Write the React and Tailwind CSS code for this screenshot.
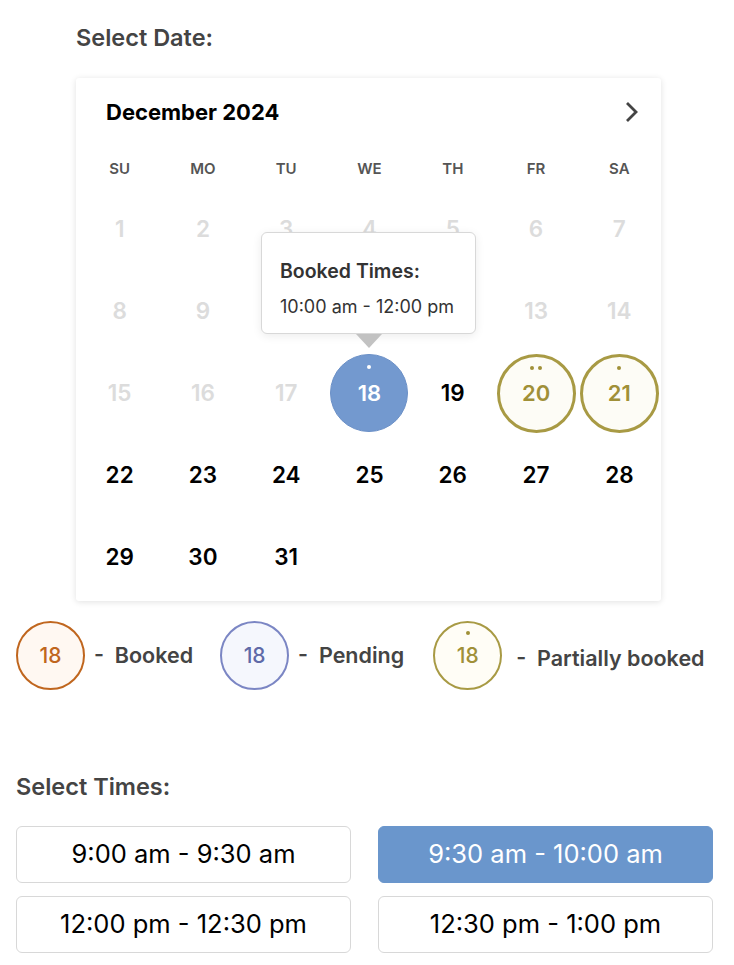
import React from 'react';

const days = ['SU', 'MO', 'TU', 'WE', 'TH', 'FR', 'SA'];

function Dot({ className = 'bg-white' }) {
  return <span className={`block h-[4px] w-[4px] rounded-full ${className}`}></span>;
}

function DayCell({ d }) {
  if (d === 18) {
    return (
      <div className="relative flex h-[78px] w-[78px] items-center justify-center rounded-full border border-[#6b90c7] bg-[#7399cf] text-[22px] font-semibold text-white">
        <div className="absolute top-[10px] left-1/2 -translate-x-1/2"><Dot /></div>
        18
      </div>
    );
  }
  if (d === 20 || d === 21) {
    return (
      <div className="relative flex h-[79px] w-[79px] items-center justify-center rounded-full border-[3px] border-[#a89a44] bg-[#fdfcf6] text-[22px] font-semibold text-[#a09038]">
        <div className="absolute top-[9px] left-1/2 flex -translate-x-1/2 gap-[4px]">
          <Dot className="bg-[#a09038]" />
          {d === 20 && <Dot className="bg-[#a09038]" />}
        </div>
        {d}
      </div>
    );
  }
  const disabled = d < 18;
  return (
    <span className={`text-[22.5px] font-semibold ${disabled ? 'text-[#dcdcdc]' : 'text-black'}`}>{d}</span>
  );
}

function LegendCircle({ border, bg, text, dot, label, labelClass = '' }) {
  return (
    <div className="flex items-center">
      <div className={`relative flex h-[69px] w-[69px] items-center justify-center rounded-full border-[2.5px] ${border} ${bg} ${text} text-[21px] font-medium`}>
        {dot && (
          <div className="absolute top-[8px] left-1/2 -translate-x-1/2">
            <Dot className="bg-[#a09038]" />
          </div>
        )}
        18
      </div>
      <span className={`ml-[9px] text-[21.5px] font-semibold text-[#444] ${labelClass}`}>- &nbsp;{label}</span>
    </div>
  );
}

function App() {
  const cells = [];
  for (let i = 1; i <= 31; i++) cells.push(i);
  const times = ['9:00 am - 9:30 am', '9:30 am - 10:00 am', '12:00 pm - 12:30 pm', '12:30 pm - 1:00 pm'];

  return (
    <div className="min-h-screen bg-white px-4 pt-[24px] font-['Inter','Noto_Sans',sans-serif]">
      <div className="ml-[60px]">
        <h2 className="h-[28px] text-[23.5px] font-semibold leading-[28px] text-[#444]">Select Date:</h2>
        <div className="relative mt-[26px] w-[585px] rounded-[3px] bg-white pt-[22px] pb-[3px] shadow-[0_1px_6px_rgba(0,0,0,0.12)]">
          <div className="flex h-[24px] items-center justify-between pl-[30px] pr-[22px]">
            <span className="text-[22px] font-bold text-black">December 2024</span>
            <svg width="15" height="24" viewBox="0 0 15 24" fill="none" stroke="#444" strokeWidth="2.8">
              <path d="M3 3l9 9-9 9" />
            </svg>
          </div>
          <div className="mt-[34px] grid h-[20px] grid-cols-7 pl-[2px]">
            {days.map((d) => (
              <div key={d} className="flex items-center justify-center text-[15px] font-semibold text-[#555]">{d}</div>
            ))}
          </div>
          <div className="mt-[10px] grid grid-cols-7 auto-rows-[82px] pl-[2px]">
            {cells.map((d) => (
              <div key={d} className="flex items-center justify-center">
                <DayCell d={d} />
              </div>
            ))}
          </div>

          {/* tooltip */}
          <div className="absolute left-[185px] top-[154px] w-[215px]">
            <div className="h-[102px] rounded-[6px] border border-[#d8d8d8] bg-white px-[18px] pt-[26px] shadow-[0_2px_10px_rgba(0,0,0,0.08)]">
              <div className="text-[19.5px] font-semibold leading-[24px] text-[#333]">Booked Times:</div>
              <div className="mt-[13px] text-[18px] leading-[22px] text-[#333]">10:00 am - 12:00 pm</div>
            </div>
            <div className="mx-auto h-0 w-0 border-x-[13px] border-t-[14px] border-x-transparent border-t-[#c2c2c2]"></div>
          </div>
        </div>
      </div>

      <div className="mt-[20px] flex items-center">
        <LegendCircle border="border-[#c0661e]" bg="bg-[#fff8f2]" text="text-[#c0661e]" label="Booked" />
        <div className="ml-[27px]">
          <LegendCircle border="border-[#7b86c4]" bg="bg-[#f5f7fd]" text="text-[#5f6aa8]" label="Pending" />
        </div>
        <div className="ml-[29px]">
          <LegendCircle border="border-[#a89a44]" bg="bg-[#fffdf6]" text="text-[#a09038]" dot label="Partially booked" labelClass="ml-[14px] mt-[6px]" />
        </div>
      </div>

      <h2 className="mt-[83px] h-[28px] text-[23.5px] font-semibold leading-[28px] text-[#444]">Select Times:</h2>
      <div className="mt-[25px] grid w-[697px] grid-cols-2 gap-x-[27px] gap-y-[13px]">
        {times.map((t, i) => (
          <button
            key={t}
            className={`h-[57px] rounded-[6px] border text-[25.5px] ${i === 1 ? 'border-[#6a96cc] bg-[#6a96cc] text-white' : 'border-[#d8d8d8] bg-white text-black'}`}
          >
            {t}
          </button>
        ))}
      </div>
    </div>
  );
}

export default App;
